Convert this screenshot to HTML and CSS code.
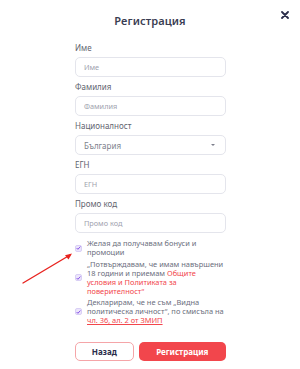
FILE: index.html
```html
<!DOCTYPE html>
<html lang="bg">
<head>
<meta charset="utf-8">
<link rel="stylesheet" href="styles.css">
</head>
<body>
<div class="page">
  <header class="head">
    <h1 class="title">Регистрация</h1>
    <button class="close" aria-label="Затвори">
      <svg width="8" height="8" viewBox="0 0 8 8"><path d="M1 1L7 7M7 1L1 7" stroke="#2b2d4a" stroke-width="1.8" stroke-linecap="round"/></svg>
    </button>
  </header>
  <form class="form">
    <div class="field">
      <label class="label">Име</label>
      <div class="input"><span class="ph">Име</span></div>
    </div>
    <div class="field">
      <label class="label">Фамилия</label>
      <div class="input"><span class="ph">Фамилия</span></div>
    </div>
    <div class="field">
      <label class="label">Националност</label>
      <div class="input select"><span class="val">България</span><span class="caret"></span></div>
    </div>
    <div class="field">
      <label class="label">ЕГН</label>
      <div class="input"><span class="ph">ЕГН</span></div>
    </div>
    <div class="field">
      <label class="label">Промо код</label>
      <div class="input"><span class="ph">Промо код</span></div>
    </div>
    <div class="checks">
      <div class="check">
        <span class="box"><svg width="5" height="4" viewBox="0 0 5 4"><path d="M0.6 2L1.9 3.3L4.4 0.6" fill="none" stroke="#7b3fe4" stroke-width="0.9"/></svg></span>
        <span class="ctext">Желая да получавам бонуси и промоции</span>
      </div>
      <div class="check">
        <span class="box"><svg width="5" height="4" viewBox="0 0 5 4"><path d="M0.6 2L1.9 3.3L4.4 0.6" fill="none" stroke="#7b3fe4" stroke-width="0.9"/></svg></span>
        <span class="ctext">„Потвърждавам, че имам навършени 18 години и приемам <a class="link">Общите условия и Политиката за поверителност“</a></span>
      </div>
      <div class="check">
        <span class="box"><svg width="5" height="4" viewBox="0 0 5 4"><path d="M0.6 2L1.9 3.3L4.4 0.6" fill="none" stroke="#7b3fe4" stroke-width="0.9"/></svg></span>
        <span class="ctext">Декларирам, че не съм „Видна политическа личност“, по смисъла на <a class="link ul">чл. 36, ал. 2 от ЗМИП</a></span>
      </div>
    </div>
    <div class="actions">
      <button type="button" class="btn back">Назад</button>
      <button type="button" class="btn primary">Регистрация</button>
    </div>
  </form>
  <svg class="arrow" width="60" height="40" viewBox="0 0 60 40">
    <path d="M3 35L50 7" stroke="#e8231f" stroke-width="1.4" stroke-linecap="round"/>
    <path d="M52 5.5L45 7.2L48.5 11.5Z" fill="#e8231f"/>
  </svg>
</div>
</body>
</html>
```

FILE: styles.css
```css
* { box-sizing: border-box; }
html, body { margin: 0; padding: 0; background: #fff; }
body {
  font-family: "Noto Sans", "DejaVu Sans", sans-serif;
  color: #3a3d52;
}
.page {
  position: relative;
  width: 300px;
  height: 369px;
  overflow: hidden;
}
.head {
  position: relative;
  display: flex;
  justify-content: center;
  padding-top: 13px;
}
.title {
  margin: 0;
  font-size: 11px;
  line-height: 16px;
  font-weight: 600;
  color: #3a3d52;
  letter-spacing: 0.1px;
}
.close {
  position: absolute;
  top: 11px;
  left: 281px;
  width: 8px;
  height: 8px;
  padding: 0;
  border: 0;
  background: none;
  display: flex;
}
.form {
  width: 151px;
  margin: 14px 0 0 75px;
  display: flex;
  flex-direction: column;
  gap: 5px;
}
.field {
  display: flex;
  flex-direction: column;
  gap: 4px;
}
.label {
  font-size: 8px;
  line-height: 10px;
  font-weight: 400;
  color: #62646f;
}
.input {
  height: 20px;
  border: 1px solid #e4e5ec;
  border-radius: 5px;
  display: flex;
  align-items: center;
  padding: 0 8px;
}
.ph {
  font-size: 7.3px;
  color: #a0a2ae;
}
.select { justify-content: space-between; padding-right: 10px; }
.val {
  font-size: 8px;
  color: #7d7f8c;
}
.caret {
  width: 0;
  height: 0;
  border-left: 2px solid transparent;
  border-right: 2px solid transparent;
  border-top: 2px solid #7d7f8c;
}
.checks {
  display: flex;
  flex-direction: column;
  gap: 2.5px;
  margin-top: 1px;
}
.check {
  display: flex;
  align-items: center;
  gap: 5px;
}
.box {
  flex: none;
  width: 7px;
  height: 7px;
  border-radius: 2px;
  background: #ece6fb;
  border: 0.5px solid #d9cff5;
  display: flex;
  align-items: center;
  justify-content: center;
}
.ctext {
  font-size: 7.45px;
  line-height: 9px;
  color: #6b6e7d;
}
.link { color: #f2464c; }
.ul { text-decoration: underline; }
.actions {
  display: flex;
  gap: 5px;
  margin-top: 12px;
}
.btn {
  height: 19px;
  border-radius: 5px;
  font-family: "Noto Sans", "DejaVu Sans", sans-serif;
  font-size: 8px;
  font-weight: 700;
  padding: 0;
}
.back {
  width: 59px;
  background: #fff;
  border: 1px solid #f5a5a8;
  color: #2b2d4a;
}
.primary {
  width: 88px;
  background: #f2464c;
  border: 0;
  color: #fff;
}
.arrow {
  position: absolute;
  left: 20px;
  top: 248px;
}
```
